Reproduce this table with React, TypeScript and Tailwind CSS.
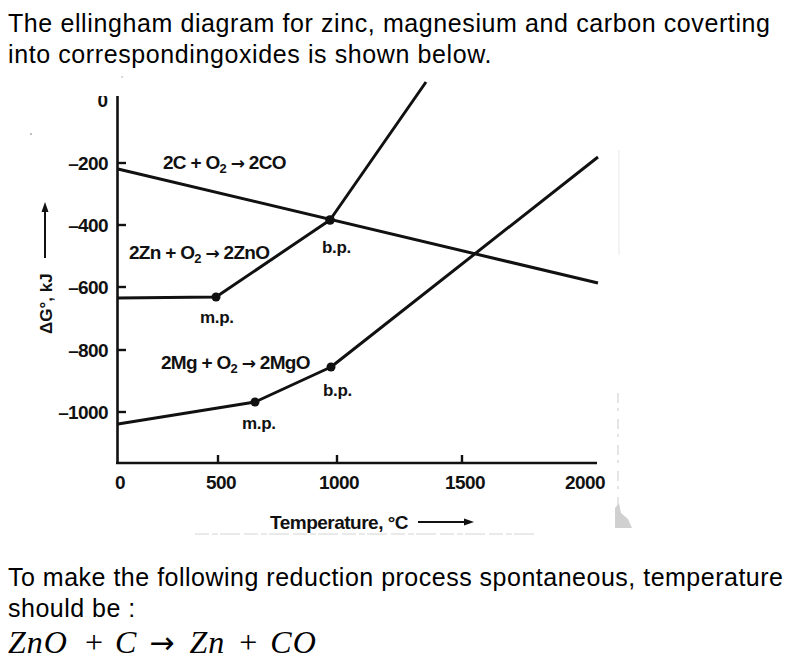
import React from "react";

const INK = "#111";
const ARROW_FONT = "'DejaVu Sans', sans-serif";

function Reaction({ x, y, lhs, rhs }: { x: number; y: number; lhs: string; rhs: string }) {
  return (
    <text x={x} y={y + 7} fontSize="19" fontWeight="700" letterSpacing="-0.7" fill={INK}>
      {lhs} + O
      <tspan fontSize="13" dy={4}>
        2
      </tspan>
      <tspan dy={-4}> </tspan>
      <tspan fontFamily={ARROW_FONT} fontSize="17">
        →
      </tspan>
      <tspan> {rhs}</tspan>
    </text>
  );
}

function Diagram() {
  const yTicks = [
    { y: 163, label: "–200" },
    { y: 225, label: "–400" },
    { y: 287, label: "–600" },
    { y: 350, label: "–800" },
    { y: 412, label: "–1000" },
  ];
  const xTicks = [218, 337, 462];
  const xLabels = [
    { x: 120, label: "0" },
    { x: 221, label: "500" },
    { x: 339, label: "1000" },
    { x: 465, label: "1500" },
    { x: 585, label: "2000" },
  ];
  return (
    <svg
      className="block ml-[30px]"
      width={618}
      height={492}
      viewBox="30 70 618 492"
      fontFamily="'Liberation Sans', Arial, sans-serif"
    >
      <defs>
        <clipPath id="zeroClip">
          <rect x="80" y="96" width="40" height="30" />
        </clipPath>
      </defs>

      {/* axes */}
      <line x1="117.5" y1="96" x2="117.5" y2="464" stroke={INK} strokeWidth="2.6" />
      <line x1="116" y1="463" x2="597" y2="463" stroke={INK} strokeWidth="2.6" />

      {yTicks.map((t) => (
        <g key={t.y}>
          <line x1="117" y1={t.y} x2="126" y2={t.y} stroke={INK} strokeWidth="2.4" />
          <text
            x="108"
            y={t.y + 7}
            textAnchor="end"
            fontSize="19"
            fontWeight="700"
            letterSpacing="-0.6"
            fill={INK}
          >
            {t.label}
          </text>
        </g>
      ))}
      <text
        x="108"
        y="107"
        textAnchor="end"
        fontSize="19"
        fontWeight="700"
        fill={INK}
        clipPath="url(#zeroClip)"
      >
        0
      </text>

      {xTicks.map((x) => (
        <line key={x} x1={x} y1="455" x2={x} y2="463" stroke={INK} strokeWidth="2.4" />
      ))}
      {xLabels.map((l) => (
        <text
          key={l.x}
          x={l.x}
          y="489"
          textAnchor="middle"
          fontSize="19"
          fontWeight="700"
          letterSpacing="-0.6"
          fill={INK}
        >
          {l.label}
        </text>
      ))}

      {/* lines */}
      <polyline points="118,169 598,283" fill="none" stroke={INK} strokeWidth="3" />
      <polyline
        points="118,298 216,297 330,220 426,82"
        fill="none"
        stroke={INK}
        strokeWidth="3"
        strokeLinejoin="round"
      />
      <polyline
        points="118,424 255,402 331,367 598,157"
        fill="none"
        stroke={INK}
        strokeWidth="3"
        strokeLinejoin="round"
      />
      <circle cx="216" cy="297" r="4.5" fill={INK} />
      <circle cx="330" cy="220" r="4.8" fill={INK} />
      <circle cx="255" cy="402" r="4.5" fill={INK} />
      <circle cx="331" cy="367" r="4.5" fill={INK} />

      {/* labels */}
      <Reaction x={163} y={162} lhs="2C" rhs="2CO" />
      <Reaction x={129} y={252} lhs="2Zn" rhs="2ZnO" />
      <Reaction x={161} y={362} lhs="2Mg" rhs="2MgO" />
      <text x="322" y="253" fontSize="17" fontWeight="700" letterSpacing="-0.3" fill={INK}>
        b.p.
      </text>
      <text x="323" y="396" fontSize="17" fontWeight="700" letterSpacing="-0.3" fill={INK}>
        b.p.
      </text>
      <text x="200" y="323" fontSize="17" fontWeight="700" letterSpacing="-0.3" fill={INK}>
        m.p.
      </text>
      <text x="242" y="429" fontSize="17" fontWeight="700" letterSpacing="-0.3" fill={INK}>
        m.p.
      </text>

      {/* y axis title */}
      <g transform="translate(52,334) rotate(-90)">
        <text x="0" y="0" fontSize="17" fontWeight="700" letterSpacing="0" fill={INK}>
          ΔG°, kJ
        </text>
      </g>
      <line x1="45" y1="258" x2="45" y2="210" stroke={INK} strokeWidth="2" />
      <polygon points="45,202 41.5,212 48.5,212" fill={INK} />

      {/* x axis title */}
      <text x="270" y="529" fontSize="19" fontWeight="700" letterSpacing="-0.5" fill={INK}>
        Temperature, °C
      </text>
      <line x1="418" y1="522" x2="466" y2="522" stroke={INK} strokeWidth="2" />
      <polygon points="474,522 464,518.5 464,525.5" fill={INK} />

      {/* scan artefacts */}
      <line
        x1="195"
        y1="534"
        x2="536"
        y2="534"
        stroke="#d4d4d4"
        strokeWidth="1"
        strokeDasharray="14 3 6 2 20 4"
      />
      <line x1="619" y1="150" x2="619" y2="255" stroke="#ececec" strokeWidth="1.2" />
      <line
        x1="618"
        y1="393"
        x2="618"
        y2="505"
        stroke="#dadada"
        strokeWidth="1.4"
        strokeDasharray="10 5 3 8"
      />
      <polygon points="615,508 619,503 621,513 628,519 632,528 615,528" fill="#d0d0d0" />
      <circle cx="31" cy="134" r="1" fill="#aaa" />
      <circle cx="122" cy="77" r="1" fill="#ccc" />
    </svg>
  );
}

export default function App() {
  return (
    <div className="w-[800px] h-[670px] overflow-hidden bg-white text-black font-['Liberation_Sans',Arial,sans-serif]">
      <p className="pl-2 pt-2 text-[25px] leading-[31px] tracking-[0.6px]">
        The ellingham diagram for zinc, magnesium and carbon coverting into correspondingoxides is
        shown below.
      </p>
      <Diagram />
      <p className="pl-2 text-[25px] leading-[31px] tracking-[0.5px]">
        To make the following reduction process spontaneous, temperature should be :
      </p>
      <div className="pl-2 flex items-baseline text-[32px] leading-[36px] font-['Liberation_Serif','Times_New_Roman',serif]">
        <span className="italic tracking-[1px]">ZnO</span>
        <span className="ml-[17px]">+</span>
        <span className="ml-[12px] italic">C</span>
        <span className="ml-[13px] text-[30px] font-['DejaVu_Sans',sans-serif]">→</span>
        <span className="ml-[15px] italic tracking-[1px]">Zn</span>
        <span className="ml-[14px]">+</span>
        <span className="ml-[13px] italic tracking-[1px]">CO</span>
      </div>
    </div>
  );
}
